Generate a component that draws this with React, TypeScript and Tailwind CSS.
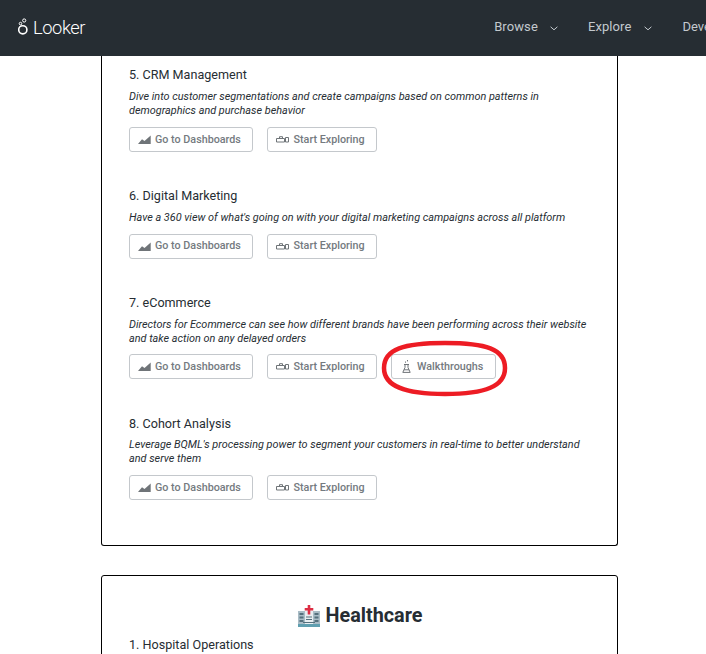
const font = { fontFamily: "Roboto, sans-serif" };

function Chevron() {
  return (
    <svg width="8" height="5" viewBox="0 0 8 5" fill="none" stroke="#c3c9ce" strokeWidth="1" className="ml-[12px] mt-[2px]">
      <path d="M0.6 0.8L4 3.8 7.4 0.8" />
    </svg>
  );
}

function AreaIcon() {
  return (
    <svg width="13" height="9" viewBox="0 0 13 9" fill="#6f7478" className="mr-[4px]">
      <path d="M0 9L4 4.2l2.5 1.8L12.7 0.4V9z" />
    </svg>
  );
}

function ExploreIcon() {
  return (
    <svg width="13" height="7" viewBox="0 0 13 7" fill="none" stroke="#6f7478" strokeWidth="1" className="mr-[4.5px]">
      <path d="M0.5 2.5h8v3.5h-8zM3.5 2.5V0.7h3v1.8M8.5 3.5h1M9.5 1.5h3v4.5h-3z" />
    </svg>
  );
}

function FlaskIcon() {
  return (
    <svg width="9" height="13" viewBox="0 0 9 13" fill="none" stroke="#6f7478" strokeWidth="1" className="mr-[6px]">
      <path d="M2 4.5h5M3 4.5v3L0.8 12.4h7.4L6 7.5v-3M2 9.8h5M5.5 0v1.4M3.5 1.5v1.2" />
    </svg>
  );
}

function Btn({ icon, label, w, down }: { icon: React.ReactNode; label: string; w: string; down: boolean }) {
  return (
    <div className={`${w} h-[25px] flex items-center rounded-[3px] border border-[#c4c8cc] bg-white text-[10.75px] font-medium text-[#747a80]`}>
      {icon}
      <span className={down ? "pt-[1px]" : ""}>{label}</span>
    </div>
  );
}

function Section({
  title,
  lines,
  walk,
  descMt = "mt-[6px]",
  btnMt = "mt-[9px]",
  down = true,
}: {
  title: string;
  lines: string[];
  walk?: boolean;
  descMt?: string;
  btnMt?: string;
  down?: boolean;
}) {
  return (
    <div>
      <div className="text-[12.6px] leading-[18px] text-[#262d33]">{title}</div>
      <div className={`${descMt} text-[10.87px] leading-[14px] italic text-[#262d33]`}>
        {lines.map((l) => (
          <div key={l}>{l}</div>
        ))}
      </div>
      <div className={`${btnMt} flex gap-[14px]`}>
        <Btn w="w-[124px] pl-[8px]" icon={<AreaIcon />} label="Go to Dashboards" down={down} />
        <Btn w="w-[110px] pl-[8px]" icon={<ExploreIcon />} label="Start Exploring" down={down} />
        {walk && (
          <div className="relative">
            <Btn w="w-[105px] pl-[10px]" icon={<FlaskIcon />} label="Walkthroughs" down={down} />
            <svg width="130" height="60" viewBox="0 0 130 60" fill="none" className="absolute left-[-11px] top-[-15px]">
              <path
                d="M4 29C4 10 24 4 65 4C106 4 125 10 125 29C125 47 106 55 65 55C24 55 4 47 4 29Z"
                stroke="#ed1c24"
                strokeWidth="4.5"
              />
            </svg>
          </div>
        )}
      </div>
    </div>
  );
}

function HospitalIcon() {
  return (
    <svg width="23" height="23" viewBox="0 0 23 23" className="ml-[1px] mr-[5px]">
      <rect x="0" y="6" width="22" height="16" fill="#a9bcc6" />
      <rect x="0" y="19" width="22" height="3" fill="#5f9fb0" />
      <rect x="7" y="3" width="8" height="16" fill="#e8eef1" />
      <path d="M9.7 0h2.6v3h3v2.6h-3v4h-2.6v-4h-3V3h3z" fill="#dd2e44" />
      <g fill="#55707d">
        <rect x="1.5" y="8" width="4" height="2" />
        <rect x="1.5" y="11.5" width="4" height="2" />
        <rect x="1.5" y="15" width="4" height="2" />
        <rect x="16.5" y="8" width="4" height="2" />
        <rect x="16.5" y="11.5" width="4" height="2" />
        <rect x="16.5" y="15" width="4" height="2" />
        <rect x="8" y="11.5" width="6" height="1" />
        <rect x="8" y="14" width="6" height="1" />
        <rect x="5" y="17" width="12" height="1" />
      </g>
    </svg>
  );
}

export default function App() {
  return (
    <div className="h-[654px] w-[706px] overflow-hidden bg-white" style={font}>
      <header className="flex h-[56px] items-center bg-[#262d33] pl-[18px] whitespace-nowrap">
        <div className="flex items-center text-white">
          <svg width="10" height="18" viewBox="0 0 10 18" fill="none" stroke="#fff" className="mr-[5px] mb-[3px]">
            <circle cx="4.8" cy="11.8" r="4.1" strokeWidth="1.6" />
            <circle cx="6.2" cy="2.5" r="1.6" strokeWidth="1" />
            <circle cx="2.5" cy="5.6" r="1.3" strokeWidth="1" />
          </svg>
          <span className="text-[18.3px] tracking-[-0.4px] leading-none font-light">Looker</span>
        </div>
        <nav className="ml-[409px] mb-[2px] flex items-center text-[13px] font-normal text-[#c3c9ce]">
          <span className="flex items-center tracking-[0.1px]">Browse<Chevron /></span>
          <span className="ml-[30px] flex items-center tracking-[0.1px]">Explore<Chevron /></span>
          <span className="ml-[31px]">Develop</span>
        </nav>
      </header>
      <main className="ml-[101px] w-[517px]">
        <div className="h-[490px] rounded-b-[3px] border border-t-0 border-black px-[27px] pt-[10px]">
          <div className="flex flex-col gap-[35px]">
            <Section
              title="5. CRM Management"
              lines={["Dive into customer segmentations and create campaigns based on common patterns in", "demographics and purchase behavior"]}
            />
            <Section
              title="6. Digital Marketing"
              lines={["Have a 360 view of what's going on with your digital marketing campaigns across all platform"]}
              down={false}
            />
            <div className="pb-[1px]">
              <Section
                title="7. eCommerce"
                lines={["Directors for Ecommerce can see how different brands have been performing across their website", "and take action on any delayed orders"]}
                btnMt="mt-[8px]"
                walk
              />
            </div>
            <Section
              title="8. Cohort Analysis"
              lines={["Leverage BQML's processing power to segment your customers in real-time to better understand", "and serve them"]}
              descMt="mt-[5px]"
            />
          </div>
        </div>
        <div className="mt-[29px] h-[200px] rounded-t-[3px] border border-black px-[27px] pt-[27px]">
          <div className="flex items-center justify-center text-[19.8px] leading-[26px] font-bold text-[#262d33]">
            <HospitalIcon />
            <span>Healthcare</span>
          </div>
          <div className="mt-[7px] text-[12.6px] leading-[18px] text-[#262d33]">1. Hospital Operations</div>
        </div>
      </main>
    </div>
  );
}
